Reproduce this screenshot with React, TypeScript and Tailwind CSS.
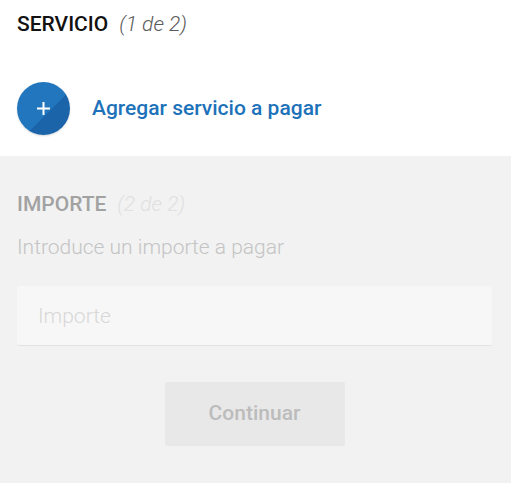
import { useState } from "react";

export default function App() {
  const [importe, setImporte] = useState("");

  return (
    <div className="min-h-screen w-full bg-[#f2f2f2] font-['Roboto',sans-serif]">
      {/* Paso 1 */}
      <section className="bg-white px-[17px] pt-[12px] pb-[21px]">
        <h2 className="flex items-baseline gap-[11px] text-[21px] leading-[25px]">
          <span className="font-medium text-[#121212]">SERVICIO</span>
          <span className="italic font-light text-[#5a5a5a]">(1 de 2)</span>
        </h2>
        <button className="mt-[45px] flex items-center gap-[22px]">
          <span className="relative flex h-[53px] w-[53px] items-center justify-center overflow-hidden rounded-full bg-[linear-gradient(135deg,#2276bd_58%,#1c64a9_58%)] shadow-[0_1px_2px_rgba(0,0,0,0.15)]">
            <svg width="15" height="15" viewBox="0 0 15 15">
              <path d="M7.5 1v13M1 7.5h13" stroke="white" strokeWidth="2" />
            </svg>
          </span>
          <span className="text-[21px] font-medium text-[#1d72b9]">Agregar servicio a pagar</span>
        </button>
      </section>

      {/* Paso 2 */}
      <section className="pl-[17px] pr-[19px] pt-[36px]">
        <h2 className="flex items-baseline gap-[11px] text-[21px] leading-[25px]">
          <span className="font-medium text-[#a2a2a2]">IMPORTE</span>
          <span className="italic font-light text-[#e0e0e0]">(2 de 2)</span>
        </h2>
        <p className="mt-[18px] text-[21px] font-light leading-[25px] text-[#c4c4c4]">
          Introduce un importe a pagar
        </p>
        <input
          value={importe}
          onChange={(e) => setImporte(e.target.value)}
          placeholder="Importe"
          disabled
          className="mt-[26px] block h-[60px] w-full rounded-[2px] border-b border-[#e2e2e2] bg-[#f7f7f7] px-[21px] text-[21px] font-light text-[#333] placeholder:text-[#d8d8d8] outline-none"
        />
        <div className="mt-[36px] flex justify-center">
          <button
            disabled
            className="h-[64px] w-[180px] rounded-[2px] bg-[#e8e8e8] text-[21px] font-medium text-[#bcbcbc]"
          >
            Continuar
          </button>
        </div>
      </section>
    </div>
  );
}
